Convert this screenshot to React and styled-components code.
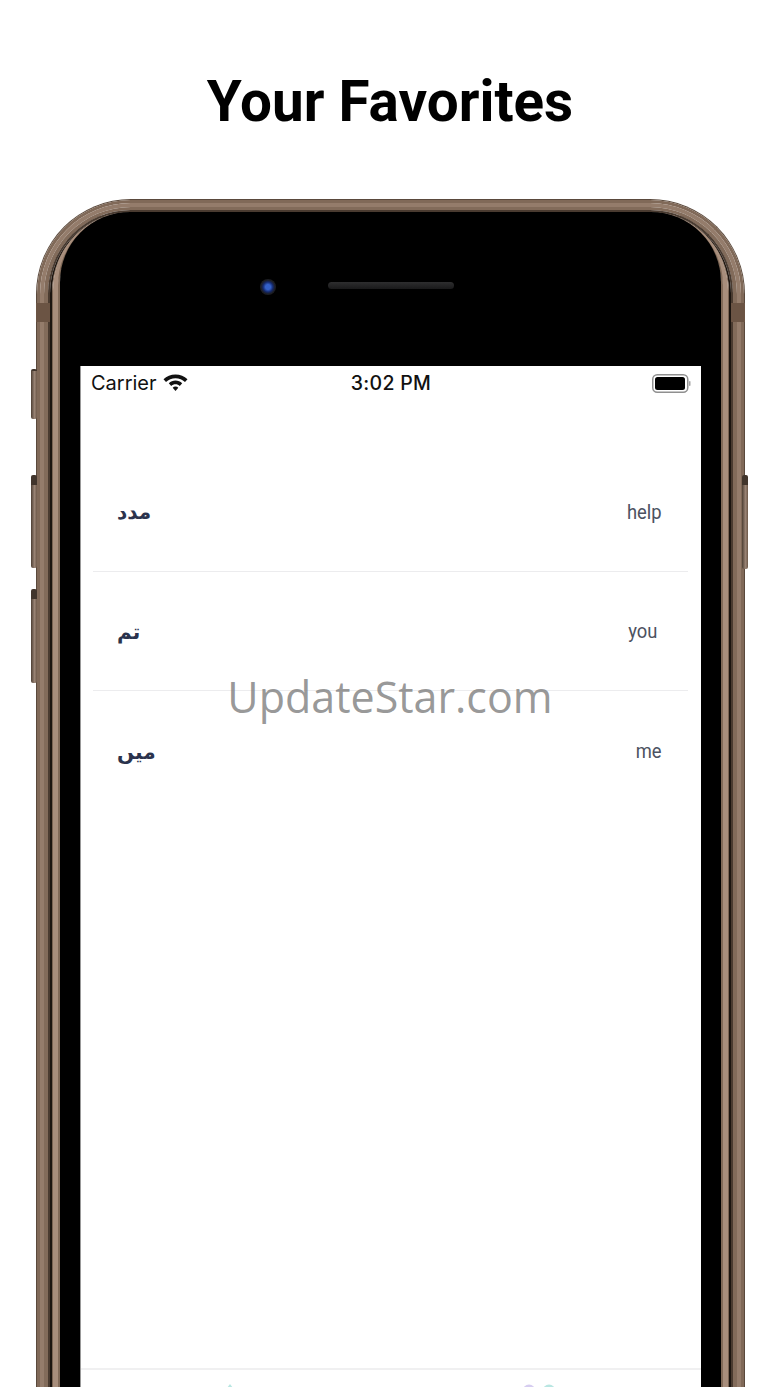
import React from "react";
import styled, { createGlobalStyle } from "styled-components";

const favorites = [
  { id: 1, urdu: "مدد", english: "help", inset: 0 },
  { id: 2, urdu: "تم", english: "you", inset: 5 },
  { id: 3, urdu: "میں", english: "me", inset: 0 },
];

// bronze bands of the frame, outermost first: colour, top width, side width
const frameBands = [
  ["#5a493c", 1, 1],
  ["#806958", 3, 3],
  ["#947c6b", 4, 4],
  ["#826b5a", 3, 4],
  ["#4a3b30", 2, 2],
  ["#1c1510", 0, 2],
  ["#7a6453", 0, 1],
  ["#a88e7c", 0, 5],
  ["#816a58", 0, 2],
];

const GlobalStyle = createGlobalStyle`
  html, body {
    margin: 0;
    background: #fff;
  }
`;

const Page = styled.div`
  position: relative;
  width: 780px;
  height: 1387px;
  overflow: hidden;
  background: #fff;
`;

const Title = styled.h1`
  margin: 0;
  height: 199px;
  padding-top: 69px;
  box-sizing: border-box;
  text-align: center;
  font: 700 56.6px/66px Roboto, sans-serif;
  color: #000;
`;

const Phone = styled.div`
  position: relative;
  margin-left: 36px;
  width: 709px;
  height: 1260px;
`;

const Band = styled.div`
  box-sizing: border-box;
  height: 100%;
  border-style: solid;
  border-color: ${props => props.$color};
  border-width: ${props => props.$top}px ${props => props.$side}px 0;
  border-radius: ${props => props.$radius}px ${props => props.$radius}px 0 0;
`;

const Bezel = styled.div`
  display: flex;
  flex-direction: column;
  height: 100%;
  box-sizing: border-box;
  background: #000;
  padding: 0 20px;
  border-radius: 70px 70px 0 0;
`;

const Sensors = styled.div`
  flex: none;
  display: flex;
  align-items: center;
  gap: 52px;
  height: 154px;
  box-sizing: border-box;
  padding: 0 0 4px 180px;
`;

const Camera = styled.div`
  width: 16px;
  height: 16px;
  border-radius: 50%;
  background: radial-gradient(circle, #3460c8 0 2.5px, #14286a 5px, #1c1d22 7px);
`;

const Speaker = styled.div`
  width: 126px;
  height: 7px;
  margin-bottom: 3px;
  border-radius: 4px;
  background: linear-gradient(#2e2e2f, #1a1a1b);
`;

const SideButton = styled.div`
  position: absolute;
  top: ${props => props.$top}px;
  ${props => (props.$right ? "right: -3px" : "left: -5px")};
  width: 6px;
  height: ${props => props.$height}px;
  box-sizing: border-box;
  border-radius: 2px;
  background: linear-gradient(90deg, #4d3f34, #9a8475 60%, #6b5748);
  border-top: ${props => (props.$capped ? "10px" : "2px")} solid #41352c;
`;

const AntennaBand = styled.div`
  position: absolute;
  top: 104px;
  ${props => (props.$right ? "right: 0" : "left: 0")};
  width: 14px;
  height: 19px;
  background: #6b5444;
`;

const Screen = styled.div`
  flex: 1;
  display: flex;
  flex-direction: column;
  background: #fff;
  border-left: 1px solid #999;
`;

const StatusBar = styled.div`
  flex: none;
  display: grid;
  grid-template-columns: 1fr auto 1fr;
  align-items: center;
  height: 34px;
  padding: 0 10px;
  font: 400 20px/34px Inter, sans-serif;
  color: #111;
`;

const Carrier = styled.div`
  display: flex;
  align-items: center;
  gap: 6px;
`;

const Clock = styled.div`
  font-weight: 500;
  font-size: 19.5px;
  letter-spacing: 0.3px;
`;

const BatteryWrap = styled.div`
  justify-self: end;
  display: flex;
  align-items: center;
`;

const List = styled.div`
  flex: 1;
  margin-top: 52px;
  padding: 0 13px 0 12px;
`;

const Row = styled.div`
  display: flex;
  align-items: center;
  justify-content: space-between;
  box-sizing: border-box;
  height: 119.5px;
  padding: 2px 26px 0 24px;
  border-bottom: ${props => (props.$last ? "0" : "1px solid #ececee")};
`;

const Urdu = styled.div`
  font: 700 20px/1 "DejaVu Sans", sans-serif;
  color: #2b334d;
`;

const English = styled.div`
  margin-right: ${props => props.$inset}px;
  font: 400 21px/1 Roboto, sans-serif;
  color: #4c5261;
  transform: scaleX(0.875);
  transform-origin: right center;
`;

const TabBar = styled.div`
  flex: none;
  display: flex;
  align-items: flex-start;
  gap: 289px;
  height: 91px;
  box-sizing: border-box;
  padding: 14px 0 0 146px;
  border-top: 2px solid #f0f0f1;
`;

const Watermark = styled.div`
  position: absolute;
  left: 0;
  right: 0;
  top: 668px;
  text-align: center;
  font: 400 43px/58px "Open Sans", sans-serif;
  color: rgba(125, 125, 125, 0.8);
`;

const WifiIcon = () => (
  <svg width="25" height="18" viewBox="0 0 25 18">
    <path d="M12.5 0.5C7.8 0.5 3.6 2.3 0.5 5.3L3 8C5.5 5.6 8.8 4.2 12.5 4.2S19.5 5.6 22 8L24.5 5.3C21.4 2.3 17.2 0.5 12.5 0.5Z" fill="#111" />
    <path d="M12.5 6.6C10 6.6 7.6 7.6 5.8 9.3L8.2 11.9C9.3 10.8 10.8 10.2 12.5 10.2S15.7 10.8 16.8 11.9L19.2 9.3C17.4 7.6 15 6.6 12.5 6.6Z" fill="#111" />
    <path d="M12.5 12.6C11.4 12.6 10.4 13 9.7 13.8L12.5 17L15.3 13.8C14.6 13 13.6 12.6 12.5 12.6Z" fill="#111" />
  </svg>
);

const BatteryIcon = () => (
  <svg width="39" height="19" viewBox="0 0 39 19">
    <rect x="0.75" y="0.75" width="35" height="17.5" rx="4.5" fill="#fff" stroke="#8f8f8f" strokeWidth="1.5" />
    <rect x="3" y="3" width="30" height="13" rx="2.5" fill="#000" />
    <rect x="37" y="7" width="1.5" height="5" rx="0.75" fill="#a5a5a5" />
  </svg>
);

// only the top few pixels of the tab icons are in frame
const FirstTabIcon = () => (
  <svg width="6" height="12" viewBox="0 0 6 12">
    <path d="M0 4L3 0L6 4V12H0Z" fill="#b9e6e2" />
  </svg>
);

const SecondTabIcon = () => (
  <svg width="34" height="12" viewBox="0 0 34 12">
    <circle cx="7" cy="7" r="6.5" fill="#d6cdf0" />
    <circle cx="27" cy="7" r="6.5" fill="#b9e6e2" />
  </svg>
);

const ScreenContent = () => (
  <Bezel>
    <Sensors>
      <Camera />
      <Speaker />
    </Sensors>
    <Screen>
      <StatusBar>
        <Carrier>
          Carrier
          <WifiIcon />
        </Carrier>
        <Clock>3:02 PM</Clock>
        <BatteryWrap>
          <BatteryIcon />
        </BatteryWrap>
      </StatusBar>
      <List>
        {favorites.map((item, i) => (
          <Row key={item.id} $last={i === favorites.length - 1}>
            <Urdu>{item.urdu}</Urdu>
            <English $inset={item.inset}>{item.english}</English>
          </Row>
        ))}
      </List>
      <TabBar>
        <FirstTabIcon />
        <SecondTabIcon />
      </TabBar>
    </Screen>
  </Bezel>
);

// wraps the bezel in the frame bands, each one's radius shrinking by the width outside it
const Frame = ({ radius, bands, children }) => {
  if (bands.length === 0) return children;
  const [[color, top, side], ...rest] = bands;
  return (
    <Band $color={color} $top={top} $side={side} $radius={radius}>
      <Frame radius={radius - side} bands={rest}>
        {children}
      </Frame>
    </Band>
  );
};

const App = () => (
  <Page>
    <GlobalStyle />
    <Title>Your Favorites</Title>
    <Phone>
      <SideButton $top={170} $height={50} />
      <SideButton $capped $top={276} $height={93} />
      <SideButton $capped $top={390} $height={94} />
      <SideButton $capped $right $top={276} $height={94} />
      <Frame radius={95} bands={frameBands}>
        <ScreenContent />
      </Frame>
      <AntennaBand />
      <AntennaBand $right />
    </Phone>
    <Watermark>UpdateStar.com</Watermark>
  </Page>
);

export default App;
